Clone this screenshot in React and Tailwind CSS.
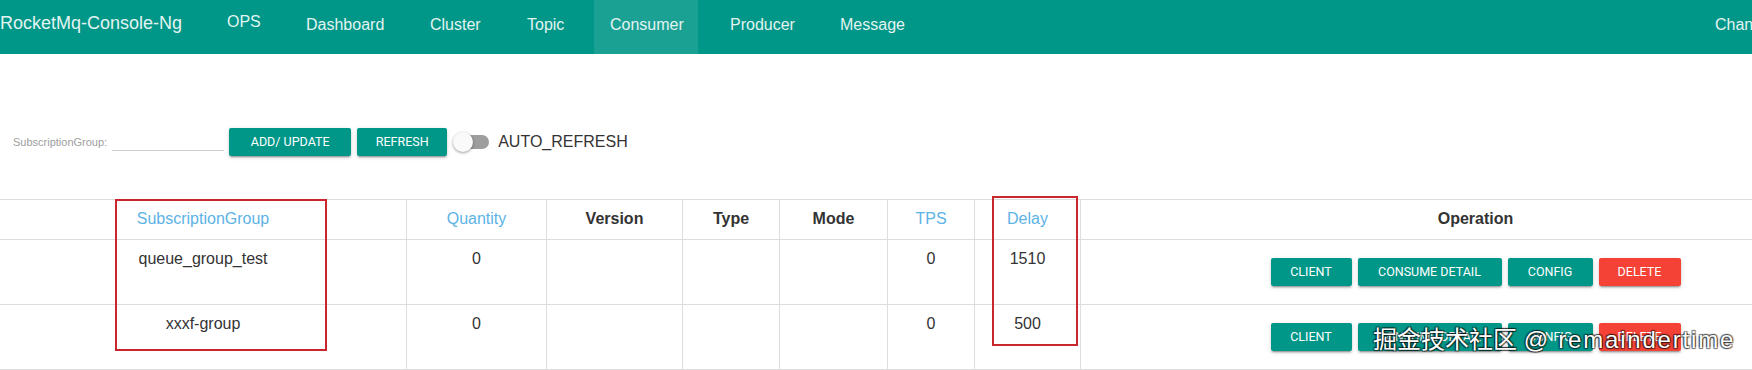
import React from 'react'

const navItems = [
  { label: 'OPS', cls: 'w-[79px] pl-[15px] pt-[12px]' },
  { label: 'Dashboard', cls: 'w-[124px] pl-[15px] pt-[15px]' },
  { label: 'Cluster', cls: 'w-[97px] pl-[15px] pt-[15px]' },
  { label: 'Topic', cls: 'w-[82px] pl-[15px] pt-[15px]' },
  { label: 'Consumer', cls: 'w-[104px] pl-[16px] pt-[15px] bg-white/10' },
  { label: 'Producer', cls: 'w-[127px] pl-[32px] pt-[15px]' },
  { label: 'Message', cls: 'w-[110px] pl-[15px] pt-[15px]' },
]

// column widths include the 1px right border
const columns = [
  { label: 'SubscriptionGroup', w: 'w-[407px]', sort: true },
  { label: 'Quantity', w: 'w-[140px]', sort: true },
  { label: 'Version', w: 'w-[136px]' },
  { label: 'Type', w: 'w-[97px]' },
  { label: 'Mode', w: 'w-[108px]' },
  { label: 'TPS', w: 'w-[87px]', sort: true },
  { label: 'Delay', w: 'w-[106px]', sort: true },
]

const rows = [
  { group: 'queue_group_test', quantity: 0, tps: 0, delay: 1510 },
  { group: 'xxxf-group', quantity: 0, tps: 0, delay: 500 },
]

const shadow =
  'shadow-[0_2px_2px_0_rgba(0,0,0,0.14),0_3px_1px_-2px_rgba(0,0,0,0.2),0_1px_5px_0_rgba(0,0,0,0.12)]'

function Btn({ children, w, danger }) {
  return (
    <button
      className={`${w} h-[28px] rounded-[2px] ${danger ? 'bg-[#f44336]' : 'bg-[#009688]'} ${shadow} text-white text-[12.5px] font-normal uppercase font-['Roboto',sans-serif] whitespace-nowrap`}
    >
      {children}
    </button>
  )
}

export default function App() {
  return (
    <div className="relative w-[1752px] h-[370px] overflow-hidden bg-white text-[#333] font-['Liberation_Sans',Arial,sans-serif]">
      {/* Navbar */}
      <div className="flex h-[54px] bg-[#009688] text-[#e2f4f1] overflow-hidden">
        <div className="w-[212px] pt-[13px] text-[18px] leading-[20px] whitespace-nowrap">RocketMq-Console-Ng</div>
        {navItems.map(item => (
          <div key={item.label} className={`h-[54px] text-[16px] leading-[20px] whitespace-nowrap ${item.cls}`}>
            {item.label}
          </div>
        ))}
        <div className="ml-auto w-[37px] pt-[15px] text-[16px] leading-[20px] whitespace-nowrap">Change Language</div>
      </div>

      {/* Toolbar */}
      <div className="flex items-center h-[28px] mt-[74px] pl-[13px]">
        <span className="text-[11px] text-[#9e9e9e] whitespace-nowrap">SubscriptionGroup:</span>
        <div className="ml-[5px] w-[112px] h-[18px] border-b border-[#cfcfcf]" />
        <div className="ml-[5px]">
          <Btn w="w-[122px]">ADD/ UPDATE</Btn>
        </div>
        <div className="ml-[6px]">
          <Btn w="w-[90px]">REFRESH</Btn>
        </div>
        <div className="relative ml-[6px] w-[36px] h-[20px] flex items-center">
          <div className="ml-[2px] w-[34px] h-[14px] rounded-full bg-[#9e9e9e]" />
          <div className="absolute left-0 top-0 w-[20px] h-[20px] rounded-full bg-[#fafafa] shadow-[0_1px_3px_rgba(0,0,0,0.4)]" />
        </div>
        <span className="ml-[9px] text-[16px] text-[#333] whitespace-nowrap">AUTO_REFRESH</span>
      </div>

      {/* Table */}
      <div className="mt-[43px] w-[1870px] text-[16px] leading-[20px]">
        <div className="flex h-[41px] border-t border-b border-[#dddddd]">
          {columns.map(col => (
            <div
              key={col.label}
              className={`${col.w} shrink-0 border-r border-[#dddddd] pt-[9px] text-center ${col.sort ? 'text-[#5cb3e6]' : 'font-bold text-[#333]'}`}
            >
              {col.label}
            </div>
          ))}
          <div className="flex-1 pt-[9px] text-center font-bold">Operation</div>
        </div>
        {rows.map(r => (
          <div key={r.group} className="flex h-[65px] border-b border-[#dddddd]">
            <div className="w-[407px] shrink-0 border-r border-[#dddddd] pt-[9px] text-center">{r.group}</div>
            <div className="w-[140px] shrink-0 border-r border-[#dddddd] pt-[9px] text-center">{r.quantity}</div>
            <div className="w-[136px] shrink-0 border-r border-[#dddddd]" />
            <div className="w-[97px] shrink-0 border-r border-[#dddddd]" />
            <div className="w-[108px] shrink-0 border-r border-[#dddddd]" />
            <div className="w-[87px] shrink-0 border-r border-[#dddddd] pt-[9px] text-center">{r.tps}</div>
            <div className="w-[106px] shrink-0 border-r border-[#dddddd] pt-[9px] text-center">{r.delay}</div>
            <div className="flex-1 flex items-center justify-center gap-[6px]">
              <Btn w="w-[81px]">CLIENT</Btn>
              <Btn w="w-[144px]">CONSUME DETAIL</Btn>
              <Btn w="w-[85px]">CONFIG</Btn>
              <Btn w="w-[82px]" danger>DELETE</Btn>
            </div>
          </div>
        ))}
      </div>

      {/* annotation boxes */}
      <div className="absolute left-[115px] top-[199px] w-[212px] h-[152px] border-2 border-[#c9262d]" />
      <div className="absolute left-[992px] top-[196px] w-[86px] h-[150px] border-2 border-[#c9262d]" />

      {/* watermark */}
      <div className="absolute left-[1373px] top-[326px] text-[24px] leading-[28px] text-white whitespace-nowrap font-['Liberation_Sans','Noto_Sans_CJK_SC',sans-serif] [text-shadow:1px_1px_1px_rgba(0,0,0,0.55),-1px_-1px_1px_rgba(0,0,0,0.55),1px_-1px_1px_rgba(0,0,0,0.55),-1px_1px_1px_rgba(0,0,0,0.55)]">
        掘金技术社区 <span className="tracking-[1.8px]">@ remaindertime</span>
      </div>
    </div>
  )
}
